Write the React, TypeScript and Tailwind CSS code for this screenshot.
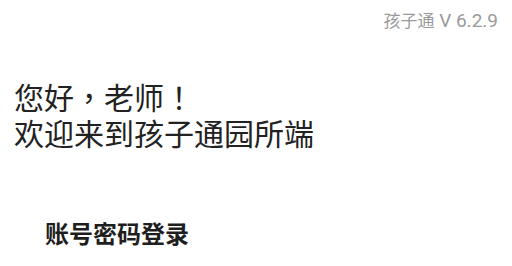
export default function App() {
  return (
    <div className="w-[512px] h-[266px] bg-white overflow-hidden flex flex-col font-['Roboto','Noto_Sans_CJK_SC',sans-serif]">
      <div className="flex justify-end pt-[8px] pr-[14px]">
        <span className="flex items-baseline leading-[26px] text-[#9a9a9a]">
          <span className="text-[17px]">孩子通</span>
          <span className="text-[19px] whitespace-pre"> V 6.2.9</span>
        </span>
      </div>
      <div className="pl-[14px] pt-[44px] text-[30px] leading-[36px] text-[#222222]">
        <div>
          您好
          <span className="font-['Noto_Sans_CJK_TC',sans-serif]">，</span>
          老师
          <span className="font-['Noto_Sans_CJK_TC',sans-serif]">！</span>
        </div>
        <div>欢迎来到孩子通园所端</div>
      </div>
      <div className="pl-[45px] pt-[67px] text-[24px] leading-[30px] font-bold text-[#1e1e1e]">
        账号密码登录
      </div>
    </div>
  );
}
